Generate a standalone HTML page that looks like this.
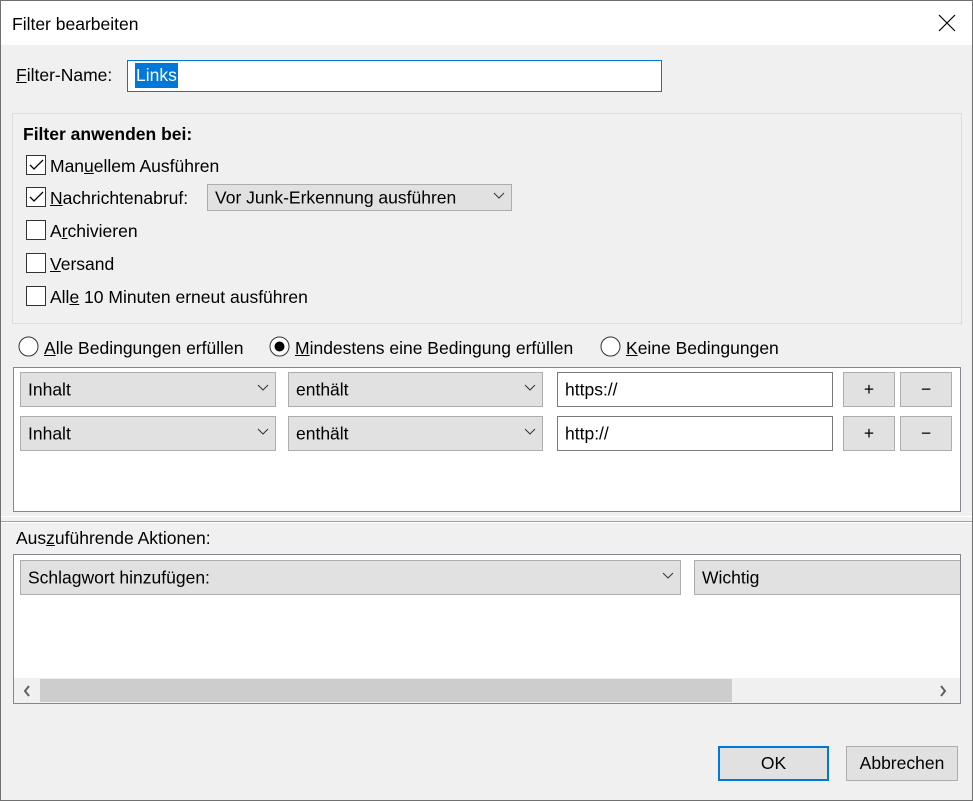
<!DOCTYPE html>
<html><head><meta charset="utf-8"><style>
*{box-sizing:border-box;margin:0;padding:0}
body{width:973px;height:801px;background:#f0f0f0;font-family:"Liberation Sans",sans-serif;font-size:17.5px;color:#000;position:relative;overflow:hidden}
.a{position:absolute}
.frame{left:0;top:0;width:973px;height:801px;border:1px solid #707070;z-index:10;pointer-events:none}
.t{position:absolute;white-space:nowrap;line-height:20px}
.cb{position:absolute;width:20px;height:20px;border:1px solid #333;background:#fff;left:26px}
.sel{position:absolute;background:#e1e1e1;border:1px solid #adadad}
.sel span{position:absolute;left:7px;top:50%;transform:translateY(-50%);white-space:nowrap}
.chev{position:absolute;right:6px;top:50%;margin-top:-6px}
.inp{position:absolute;background:#fff;border:1px solid #7a7a7a}
.inp span{position:absolute;left:7px;top:50%;transform:translateY(-50%)}
.btn{position:absolute;background:#e1e1e1;border:1px solid #adadad;text-align:center}
u{text-decoration:underline}
</style></head><body>
<div class="a" style="left:0;top:0;width:973px;height:45px;background:#fff"></div>
<div class="t" style="left:12px;top:14px">Filter bearbeiten</div>
<svg class="a" style="left:938px;top:14px" width="18" height="18"><path d="M1 1L17 17M17 1L1 17" stroke="#000" stroke-width="1.2"/></svg>

<div class="t" style="left:16px;top:65px"><u>F</u>ilter-Name:</div>
<div class="a" style="left:127px;top:60px;width:535px;height:32px;background:#fff;border:1px solid #0078d7"></div>
<div class="t" style="left:135px;top:63px;height:25px;line-height:25px;background:#0078d7;color:#fff;padding:0 1px">Links</div>

<div class="a" style="left:12px;top:113px;width:950px;height:211px;border:1px solid #dcdcdc"></div>
<div class="t" style="left:23px;top:124px;font-weight:bold">Filter anwenden bei:</div>
<div class="cb" style="top:155px"></div><svg class="a" style="left:29px;top:159px" width="15" height="12"><path d="M1 6L5 10L14 1" stroke="#000" stroke-width="1.3" fill="none"/></svg>
<div class="t" style="left:50px;top:156px">Man<u>u</u>ellem Ausführen</div>
<div class="cb" style="top:187px"></div><svg class="a" style="left:29px;top:191px" width="15" height="12"><path d="M1 6L5 10L14 1" stroke="#000" stroke-width="1.3" fill="none"/></svg>
<div class="t" style="left:50px;top:188px"><u>N</u>achrichtenabruf:</div>
<div class="sel" style="left:207px;top:184px;width:305px;height:27px"><span>Vor Junk-Erkennung ausführen</span><svg class="chev" width="12" height="8"><path d="M1 1L6 6L11 1" stroke="#333" fill="none"/></svg></div>
<div class="cb" style="top:220px"></div><div class="t" style="left:50px;top:221px">A<u>r</u>chivieren</div>
<div class="cb" style="top:253px"></div><div class="t" style="left:50px;top:254px"><u>V</u>ersand</div>
<div class="cb" style="top:286px"></div><div class="t" style="left:50px;top:287px">All<u>e</u> 10 Minuten erneut ausführen</div>

<svg class="a" style="left:18px;top:336px" width="21" height="21"><circle cx="10.5" cy="10.5" r="9.5" fill="#fff" stroke="#333"/></svg>
<div class="t" style="left:44px;top:338px"><u>A</u>lle Bedingungen erfüllen</div>
<svg class="a" style="left:269px;top:336px" width="21" height="21"><circle cx="10.5" cy="10.5" r="9.5" fill="#fff" stroke="#333"/><circle cx="10.5" cy="10.5" r="5" fill="#000"/></svg>
<div class="t" style="left:295px;top:338px"><u>M</u>indestens eine Bedingung erfüllen</div>
<svg class="a" style="left:600px;top:336px" width="21" height="21"><circle cx="10.5" cy="10.5" r="9.5" fill="#fff" stroke="#333"/></svg>
<div class="t" style="left:626px;top:338px"><u>K</u>eine Bedingungen</div>

<div class="a" style="left:13px;top:367px;width:948px;height:145px;background:#fff;border:1px solid #828790"></div>
<div class="sel" style="left:20px;top:372px;width:256px;height:35px"><span>Inhalt</span><svg class="chev" width="12" height="8"><path d="M1 1L6 6L11 1" stroke="#333" fill="none"/></svg></div>
<div class="sel" style="left:288px;top:372px;width:255px;height:35px"><span>enthält</span><svg class="chev" width="12" height="8"><path d="M1 1L6 6L11 1" stroke="#333" fill="none"/></svg></div>
<div class="inp" style="left:557px;top:372px;width:276px;height:35px"><span>https://</span></div>
<div class="btn" style="left:843px;top:372px;width:52px;height:35px;line-height:33px">+</div>
<div class="btn" style="left:900px;top:372px;width:52px;height:35px;line-height:33px">−</div>
<div class="sel" style="left:20px;top:416px;width:256px;height:35px"><span>Inhalt</span><svg class="chev" width="12" height="8"><path d="M1 1L6 6L11 1" stroke="#333" fill="none"/></svg></div>
<div class="sel" style="left:288px;top:416px;width:255px;height:35px"><span>enthält</span><svg class="chev" width="12" height="8"><path d="M1 1L6 6L11 1" stroke="#333" fill="none"/></svg></div>
<div class="inp" style="left:557px;top:416px;width:276px;height:35px"><span>http://</span></div>
<div class="btn" style="left:843px;top:416px;width:52px;height:35px;line-height:33px">+</div>
<div class="btn" style="left:900px;top:416px;width:52px;height:35px;line-height:33px">−</div>

<div class="a" style="left:0;top:516px;width:973px;height:1px;background:#fff"></div>
<div class="a" style="left:0;top:521px;width:973px;height:1px;background:#a0a0a0"></div>
<div class="a" style="left:0;top:522px;width:973px;height:1px;background:#fff"></div>
<div class="t" style="left:16px;top:528px">Aus<u>z</u>uführende Aktionen:</div>

<div class="a" style="left:13px;top:554px;width:948px;height:150px;background:#fff;border:1px solid #828790;overflow:hidden">
<div class="sel" style="left:6px;top:5px;width:661px;height:35px"><span>Schlagwort hinzufügen:</span><svg class="chev" width="12" height="8"><path d="M1 1L6 6L11 1" stroke="#333" fill="none"/></svg></div>
<div class="sel" style="left:680px;top:5px;width:280px;height:35px"><span>Wichtig</span></div>
<div class="a" style="left:0;top:123px;width:948px;height:25px;background:#f0f0f0"></div>
<div class="a" style="left:26px;top:124px;width:692px;height:23px;background:#cdcdcd"></div>
<svg class="a" style="left:9px;top:130px" width="8" height="12"><path d="M6 1L2 6L6 11" stroke="#606060" stroke-width="2" fill="none"/></svg>
<svg class="a" style="left:925px;top:130px" width="8" height="12"><path d="M2 1L6 6L2 11" stroke="#606060" stroke-width="2" fill="none"/></svg>
</div>

<div class="btn" style="left:718px;top:746px;width:111px;height:35px;line-height:31px;border:2px solid #0078d7">OK</div>
<div class="btn" style="left:846px;top:746px;width:112px;height:35px;line-height:33px">Abbrechen</div>
<div class="a frame"></div>
</body></html>
